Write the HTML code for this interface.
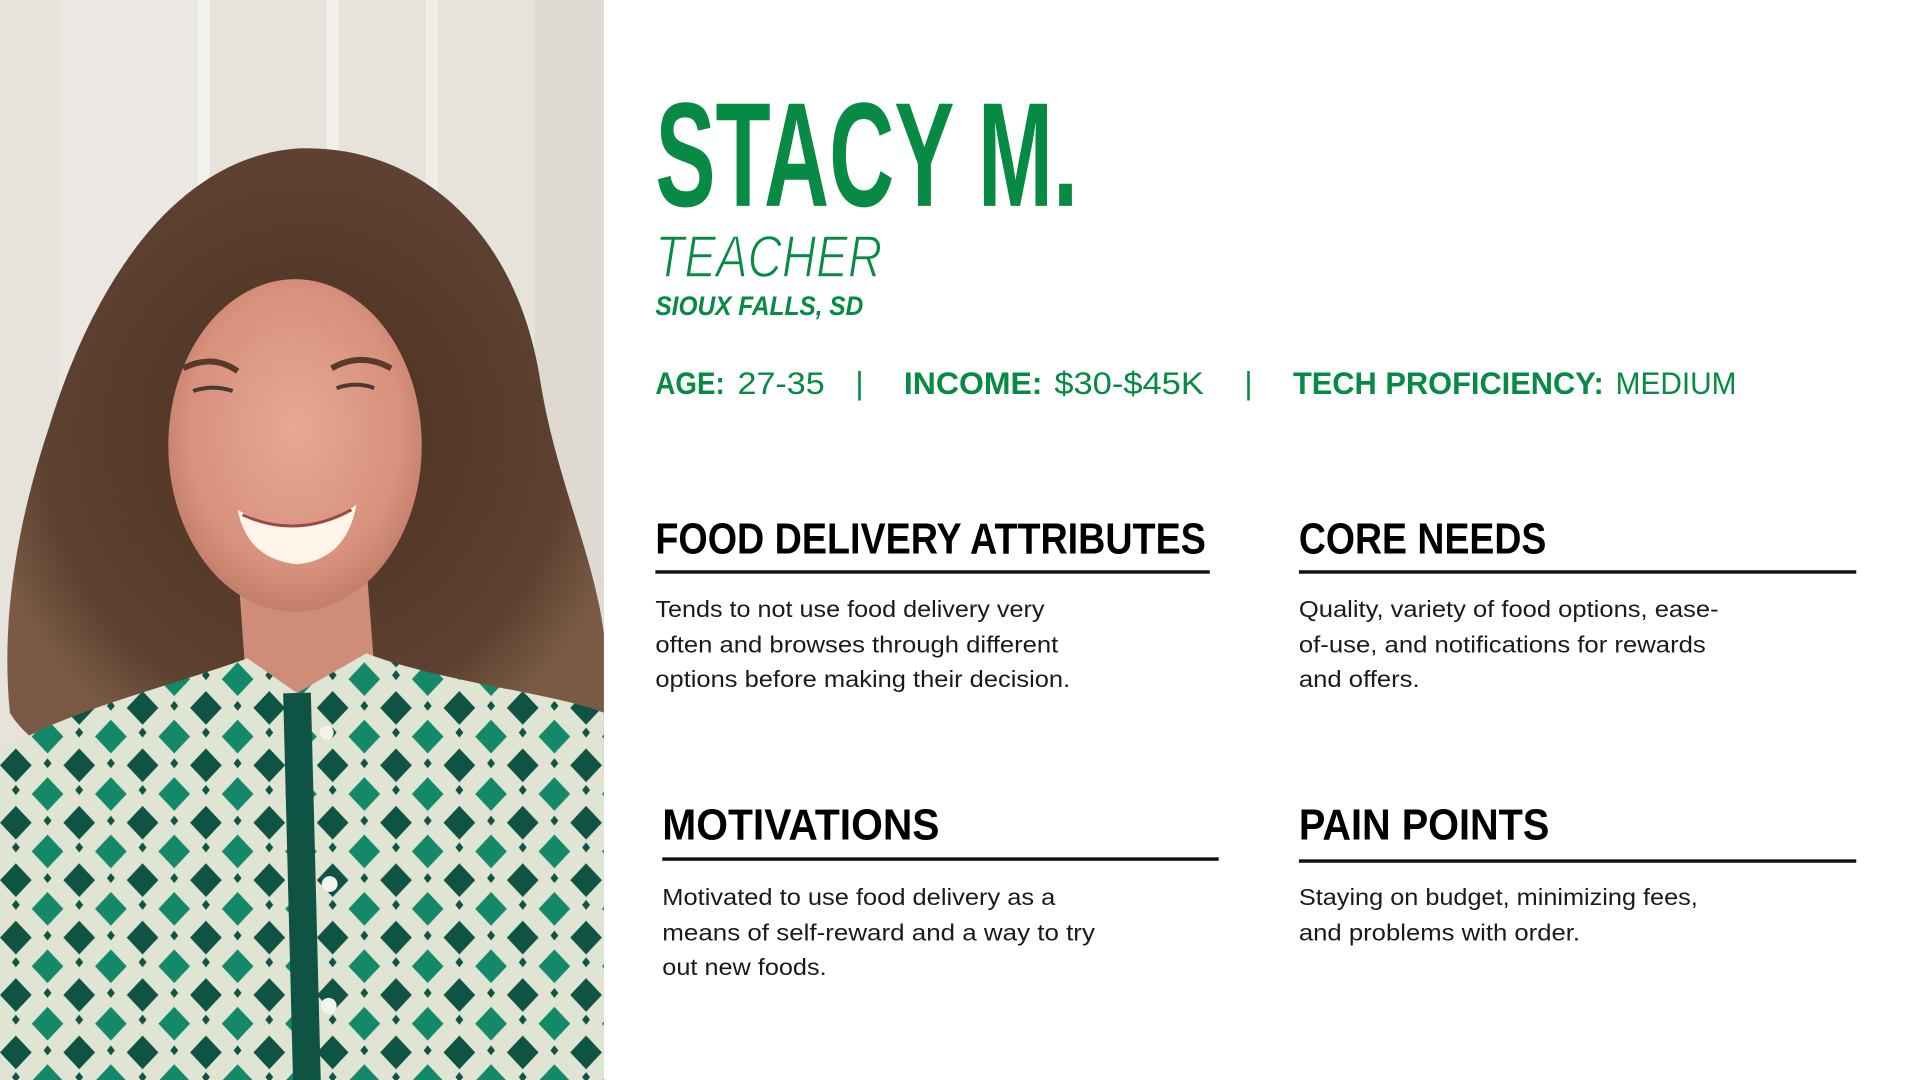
<!DOCTYPE html>
<html><head><meta charset="utf-8"><style>
html,body{margin:0;padding:0;background:#fff;width:1920px;height:1080px;overflow:hidden}
svg{display:block}
</style></head><body>
<svg width="1920" height="1080" viewBox="0 0 1920 1080" xmlns="http://www.w3.org/2000/svg">
<defs>
<pattern id="shirt" x="0" y="0" width="64" height="58" patternUnits="userSpaceOnUse">
<rect width="64" height="58" fill="#dfe4d3"/>
<path d="M16 2 L32 19 L16 36 L0 19Z" fill="#0e5343"/>
<path d="M48 31 L64 48 L48 65 L32 48Z" fill="#13896a"/>
<path d="M48 -27 L64 -10 L48 7 L32 -10Z" fill="#13896a"/>
<path d="M16 39 L20 44 L16 49 L12 44Z" fill="#0e5343"/>
<path d="M48 12 L52 17 L48 22 L44 17Z" fill="#0e5343"/>
</pattern>
<radialGradient id="face" cx="0.5" cy="0.45" r="0.6">
<stop offset="0" stop-color="#e6a896"/><stop offset="0.7" stop-color="#d7917c"/><stop offset="1" stop-color="#bb7764"/>
</radialGradient>
<radialGradient id="hair" cx="0.5" cy="0.45" r="0.55">
<stop offset="0" stop-color="#4a3022"/><stop offset="0.8" stop-color="#5e4130"/><stop offset="1" stop-color="#7a5a45"/>
</radialGradient>
</defs>
<g transform="scale(0.99)">
<!-- photo -->
<rect x="0" y="0" width="610" height="1092" fill="#e6e3dd"/>
<rect x="60" y="0" width="150" height="1092" fill="#ebe8e3"/>
<rect x="200" y="0" width="12" height="1092" fill="#f4f2ee"/>
<rect x="330" y="0" width="12" height="300" fill="#f2f0ec"/>
<rect x="430" y="0" width="12" height="300" fill="#f0eee9"/>
<rect x="540" y="0" width="70" height="1092" fill="#dedad3"/>
<!-- hair -->
<path d="M300 150 C420 145 520 230 545 380 C560 480 600 560 610 640 L610 780 C560 800 470 790 430 760 L190 760 C120 790 40 770 10 720 C0 620 20 520 50 430 C90 300 170 160 300 150Z" fill="url(#hair)"/>
<!-- neck -->
<path d="M240 570 L370 570 L380 700 L250 710Z" fill="#cf8c78"/>
<!-- face -->
<ellipse cx="298" cy="450" rx="128" ry="168" fill="url(#face)"/>
<path d="M240 515 Q300 550 360 510 Q350 565 300 570 Q250 565 240 515Z" fill="#fff4ea"/>
<path d="M245 520 Q300 545 355 515" stroke="#9a4a45" stroke-width="3" fill="none"/>
<path d="M185 372 Q215 357 240 375" stroke="#5a3a2a" stroke-width="6" fill="none"/>
<path d="M335 372 Q365 355 395 372" stroke="#5a3a2a" stroke-width="6" fill="none"/>
<path d="M195 395 Q215 388 235 395" stroke="#4a3a35" stroke-width="4" fill="none"/>
<path d="M340 392 Q360 385 378 392" stroke="#4a3a35" stroke-width="4" fill="none"/>
<!-- shirt -->
<path d="M0 760 C60 720 150 700 250 665 L300 700 L370 660 C450 690 560 700 610 720 L610 1092 L0 1092Z" fill="url(#shirt)"/>
<path d="M300 700 L310 1092" stroke="#0e5343" stroke-width="28"/>
<circle cx="330" cy="740" r="7" fill="#f2f4f0"/><circle cx="333" cy="893" r="8" fill="#f2f4f0"/><circle cx="332" cy="1016" r="8" fill="#f2f4f0"/>

<!-- right panel -->
<g fill="#078a43" font-family="'Liberation Sans', sans-serif">
<text x="662" y="208" font-size="150" font-weight="700" textLength="427" lengthAdjust="spacingAndGlyphs">STACY M.</text>
<text x="662" y="280" font-size="60" font-style="italic" font-weight="400" textLength="229" lengthAdjust="spacingAndGlyphs" stroke="#fff" stroke-width="1.5">TEACHER</text>
<text x="662" y="318" font-size="27" font-style="italic" font-weight="700" textLength="210" lengthAdjust="spacingAndGlyphs">SIOUX FALLS, SD</text>
<g font-size="32">
<text x="662" y="398" font-weight="700" textLength="70" lengthAdjust="spacingAndGlyphs">AGE:</text>
<text x="745" y="398" textLength="88" lengthAdjust="spacingAndGlyphs">27-35</text>
<text x="864" y="398">|</text>
<text x="913" y="398" font-weight="700" textLength="140" lengthAdjust="spacingAndGlyphs">INCOME:</text>
<text x="1065" y="398" textLength="151" lengthAdjust="spacingAndGlyphs">$30-$45K</text>
<text x="1257" y="398">|</text>
<text x="1306" y="398" font-weight="700" textLength="314" lengthAdjust="spacingAndGlyphs">TECH PROFICIENCY:</text>
<text x="1632" y="398" textLength="122" lengthAdjust="spacingAndGlyphs">MEDIUM</text>
</g>
</g>
<g fill="#000" font-family="'Liberation Sans', sans-serif" font-weight="700" font-size="44">
<text x="662" y="559" textLength="556" lengthAdjust="spacingAndGlyphs">FOOD DELIVERY ATTRIBUTES</text>
<text x="1312" y="559" textLength="250" lengthAdjust="spacingAndGlyphs">CORE NEEDS</text>
<text x="669" y="848" textLength="280" lengthAdjust="spacingAndGlyphs">MOTIVATIONS</text>
<text x="1312" y="848" textLength="253" lengthAdjust="spacingAndGlyphs">PAIN POINTS</text>
</g>
<g fill="#111">
<rect x="662" y="576" width="560" height="3.5"/>
<rect x="1312" y="576" width="563" height="3.5"/>
<rect x="669" y="866" width="562" height="3.5"/>
<rect x="1312" y="868" width="563" height="3.5"/>
</g>
<g fill="#1a1a1a" font-family="'Liberation Sans', sans-serif" font-size="23">
<text x="662" y="623" textLength="393" lengthAdjust="spacingAndGlyphs">Tends to not use food delivery very</text>
<text x="662" y="659" textLength="407" lengthAdjust="spacingAndGlyphs">often and browses through different</text>
<text x="662" y="694" textLength="419" lengthAdjust="spacingAndGlyphs">options before making their decision.</text>
<text x="1312" y="623" textLength="424" lengthAdjust="spacingAndGlyphs">Quality, variety of food options, ease-</text>
<text x="1312" y="659" textLength="411" lengthAdjust="spacingAndGlyphs">of-use, and notifications for rewards</text>
<text x="1312" y="694" textLength="122" lengthAdjust="spacingAndGlyphs">and offers.</text>
<text x="669" y="914" textLength="397" lengthAdjust="spacingAndGlyphs">Motivated to use food delivery as a</text>
<text x="669" y="950" textLength="437" lengthAdjust="spacingAndGlyphs">means of self-reward and a way to try</text>
<text x="669" y="985" textLength="166" lengthAdjust="spacingAndGlyphs">out new foods.</text>
<text x="1312" y="914" textLength="403" lengthAdjust="spacingAndGlyphs">Staying on budget, minimizing fees,</text>
<text x="1312" y="950" textLength="284" lengthAdjust="spacingAndGlyphs">and problems with order.</text>
</g>
</g>
</svg>
</body></html>
